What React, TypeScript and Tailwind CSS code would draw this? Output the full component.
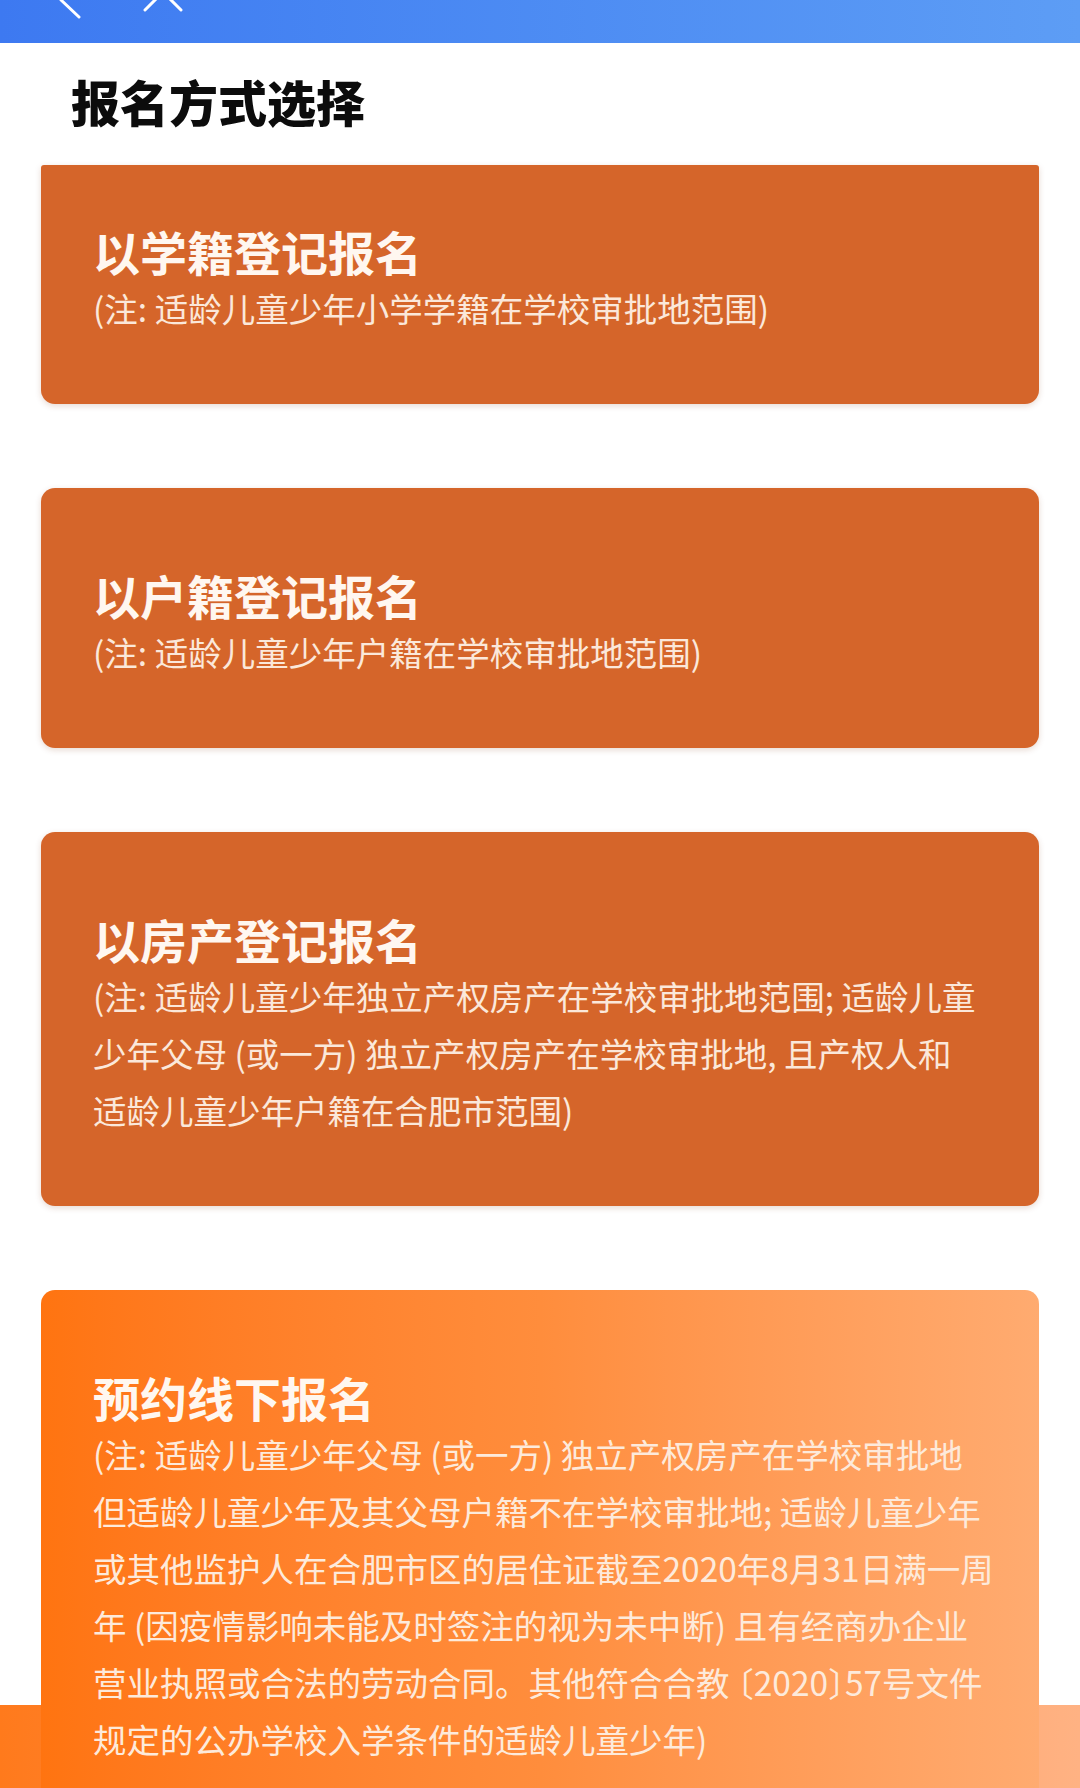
const cards = [
  {
    title: "以学籍登记报名",
    lines: ["(注: 适龄儿童少年小学学籍在学校审批地范围)"],
    top: "pt-[58px]",
    shape: "rounded-t-[3px] rounded-b-[14px]",
  },
  {
    title: "以户籍登记报名",
    lines: ["(注: 适龄儿童少年户籍在学校审批地范围)"],
    top: "pt-[79px]",
    shape: "rounded-[14px]",
  },
  {
    title: "以房产登记报名",
    lines: [
      "(注: 适龄儿童少年独立产权房产在学校审批地范围; 适龄儿童",
      "少年父母 (或一方) 独立产权房产在学校审批地, 且产权人和",
      "适龄儿童少年户籍在合肥市范围)",
    ],
    top: "pt-[79px]",
    shape: "rounded-[14px]",
  },
];

const offline = [
  "(注: 适龄儿童少年父母 (或一方) 独立产权房产在学校审批地",
  "但适龄儿童少年及其父母户籍不在学校审批地; 适龄儿童少年",
  "或其他监护人在合肥市区的居住证截至2020年8月31日满一周",
  "年 (因疫情影响未能及时签注的视为未中断) 且有经商办企业",
];

function NavIcons() {
  return (
    <svg width="240" height="43" viewBox="0 0 240 43" fill="none" aria-hidden>
      <polyline points="79,-18 61,0 79,17" stroke="white" strokeWidth="3" strokeLinecap="round" strokeLinejoin="round" />
      <line x1="145" y1="-26" x2="181" y2="10" stroke="white" strokeWidth="3" strokeLinecap="round" />
      <line x1="181" y1="-26" x2="145" y2="10" stroke="white" strokeWidth="3" strokeLinecap="round" />
    </svg>
  );
}

export default function App() {
  return (
    <div className="relative h-[1788px] overflow-hidden bg-white font-['Noto_Sans_CJK_SC','Noto_Sans',sans-serif]">
      <header className="h-[43px] bg-linear-to-r from-[#3d79f1] to-[#5d9df5]">
        <NavIcons />
      </header>

      <h1 className="pl-[71px] pt-[33px] pb-[40px] text-[49px] font-black leading-[49px] text-[#0c0c0c]">
        报名方式选择
      </h1>

      <div className="relative z-10 mx-[41px] flex flex-col gap-[84px]">
        {cards.map((card) => (
          <section
            key={card.title}
            className={`${card.top} ${card.shape} bg-[#d5652a] pb-[68px] pl-[52px] shadow-[0_2px_6px_rgba(120,50,10,0.18)]`}
          >
            <h2 className="text-[47px] font-bold leading-[56px] text-[#fff7f0]">{card.title}</h2>
            {card.lines.map((line) => (
              <p key={line} className="whitespace-nowrap text-[33.5px] leading-[57px] text-[#fbe8da]">
                {line}
              </p>
            ))}
          </section>
        ))}

        <section className="rounded-t-[14px] bg-linear-to-r from-[#ff7410] via-[#ff8d3c] to-[#ffab70] pb-[68px] pl-[52px] pt-[79px]">
          <h2 className="text-[47px] font-bold leading-[56px] text-[#fff7f0]">预约线下报名</h2>
          {offline.map((line) => (
            <p key={line} className="whitespace-nowrap text-[33.5px] leading-[57px] text-[#fdeadb]">
              {line}
            </p>
          ))}
          <p className="whitespace-nowrap text-[33.5px] leading-[57px] text-[#fdeadb]">
            营业执照或合法的劳动合同。其他符合合教
            <span className="[font-feature-settings:'halt']"> 〔</span>2020
            <span className="[font-feature-settings:'halt']">〕</span>57号文件
          </p>
          <p className="whitespace-nowrap text-[33.5px] leading-[57px] text-[#fdeadb]">
            规定的公办学校入学条件的适龄儿童少年)
          </p>
        </section>
      </div>

      <div className="absolute inset-x-0 bottom-0 h-[83px] bg-linear-to-r from-[#ff7a1c] via-[#ff9347] to-[#ffb283]" />
    </div>
  );
}
